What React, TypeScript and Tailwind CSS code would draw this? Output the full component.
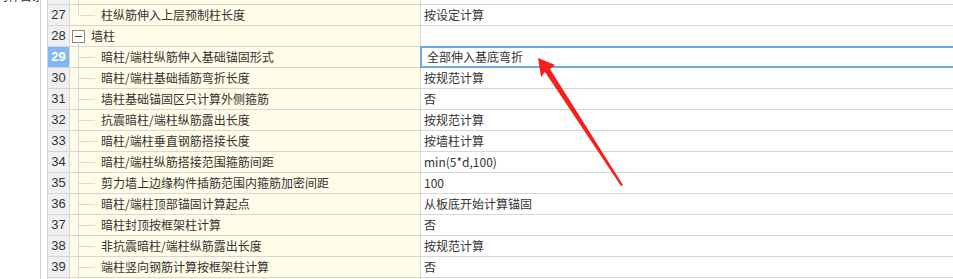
import React from "react";

type Row = {
  no: number;
  name: string;
  value: string;
  kind?: "last" | "group" | "item";
  selected?: boolean;
};

const rows: Row[] = [
  { no: 27, name: "柱纵筋伸入上层预制柱长度", value: "按设定计算", kind: "last" },
  { no: 28, name: "墙柱", value: "", kind: "group" },
  { no: 29, name: "暗柱/端柱纵筋伸入基础锚固形式", value: "全部伸入基底弯折", selected: true },
  { no: 30, name: "暗柱/端柱基础插筋弯折长度", value: "按规范计算" },
  { no: 31, name: "墙柱基础锚固区只计算外侧箍筋", value: "否" },
  { no: 32, name: "抗震暗柱/端柱纵筋露出长度", value: "按规范计算" },
  { no: 33, name: "暗柱/端柱垂直钢筋搭接长度", value: "按墙柱计算" },
  { no: 34, name: "暗柱/端柱纵筋搭接范围箍筋间距", value: "min(5*d,100)" },
  { no: 35, name: "剪力墙上边缘构件插筋范围内箍筋加密间距", value: "100" },
  { no: 36, name: "暗柱/端柱顶部锚固计算起点", value: "从板底开始计算锚固" },
  { no: 37, name: "暗柱封顶按框架柱计算", value: "否" },
  { no: 38, name: "非抗震暗柱/端柱纵筋露出长度", value: "按规范计算" },
  { no: 39, name: "端柱竖向钢筋计算按框架柱计算", value: "否" },
];

const cjk = "font-['Microsoft_YaHei','Noto_Sans_CJK_SC',sans-serif]";

function TreeGutter({ kind }: { kind?: Row["kind"] }) {
  if (kind === "group") {
    return (
      <svg width="21" height="20" className="shrink-0">
        <rect x="2.5" y="4.5" width="12" height="12" fill="#fff" stroke="#8a8a8a" />
        <line x1="5" y1="10.5" x2="12" y2="10.5" stroke="#444" />
        <line x1="8.5" y1="16.5" x2="8.5" y2="20" stroke="#d9d9d9" />
      </svg>
    );
  }
  return (
    <svg width="31" height="20" className="shrink-0">
      <line x1="8.5" y1="0" x2="8.5" y2={kind === "last" ? 10.5 : 20} stroke="#d9d9d9" />
      <line x1="9" y1="10.5" x2="25" y2="10.5" stroke="#d9d9d9" />
    </svg>
  );
}

function GridRow({ row }: { row: Row }) {
  return (
    <div className="flex h-[21px] border-b border-[#d6d6d6]">
      <div
        className={`w-[23px] shrink-0 border-x border-[#d6d6d6] flex items-center justify-center text-[13px] font-['Liberation_Sans',sans-serif] ${
          row.selected ? "bg-[#80b8f6] text-white font-bold" : "bg-[#f0f0f0] text-[#333]"
        }`}
      >
        {row.no}
      </div>
      <div className="w-[351px] shrink-0 border-r border-[#d6d6d6] bg-[#fffde8] flex items-center overflow-hidden whitespace-nowrap">
        <TreeGutter kind={row.kind} />
        <span className="text-[12px] text-[#333]">{row.name}</span>
      </div>
      <div className="relative flex-1 flex items-center bg-white text-[12px] text-[#333] whitespace-nowrap">
        {row.selected && (
          <div className="absolute -top-px -left-px -right-[3px] -bottom-px border-2 border-[#6fa8e6]" />
        )}
        <span className={row.selected ? "pl-[6px]" : "pl-[3px]"}>{row.value}</span>
      </div>
    </div>
  );
}

export default function App() {
  return (
    <div className={`relative w-[953px] h-[279px] overflow-hidden bg-white ${cjk}`}>
      <div className="flex h-full">
        <div className="w-[41px] shrink-0 border-r border-[#d0d0d0] overflow-hidden">
          <div className="-mt-[14px] -ml-[4px] text-[12px] leading-[20px] text-[#333] whitespace-nowrap">
            构件目录
          </div>
        </div>
        <div className="w-[6px] shrink-0" />
        <div className="flex-1 flex flex-col overflow-hidden">
          <div className="flex h-[5px] border-b border-[#d6d6d6]">
            <div className="w-[23px] shrink-0 border-x border-[#d6d6d6] bg-[#f0f0f0]" />
            <div className="w-[351px] shrink-0 border-r border-[#d6d6d6] bg-[#fffde8] overflow-hidden">
              <svg width="31" height="4">
                <line x1="8.5" y1="0" x2="8.5" y2="4" stroke="#d9d9d9" />
              </svg>
            </div>
            <div className="flex-1 bg-white" />
          </div>
          {rows.map((r) => (
            <GridRow key={r.no} row={r} />
          ))}
          <div className="flex h-[21px]">
            <div className="w-[23px] shrink-0 border-x border-[#d6d6d6] bg-[#f0f0f0]" />
            <div className="w-[351px] shrink-0 border-r border-[#d6d6d6] bg-[#fffde8]" />
            <div className="flex-1 bg-white" />
          </div>
        </div>
      </div>

      <svg className="absolute inset-0 pointer-events-none" width="953" height="279">
        <polygon
          points="538,58 555,65 550,69 623,185 621,186 545,72 541,77"
          fill="#f5201e"
        />
      </svg>
    </div>
  );
}
